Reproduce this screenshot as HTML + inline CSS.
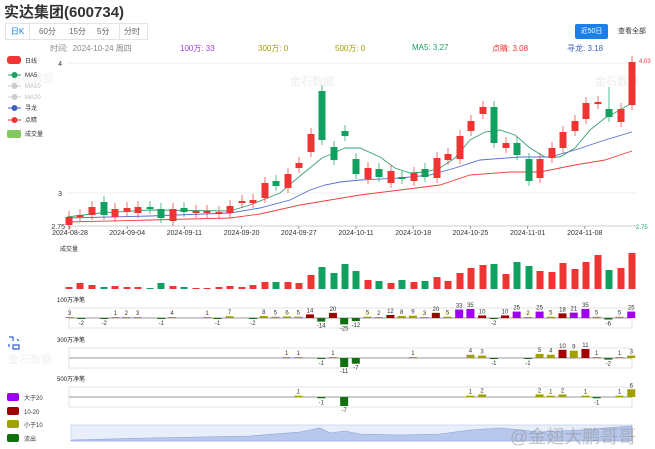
<!DOCTYPE html>
<html><head><meta charset="utf-8">
<style>
*{margin:0;padding:0;box-sizing:border-box}
body{width:655px;height:448px;overflow:hidden;background:#fff;font-family:"Liberation Sans","Noto Sans CJK SC",sans-serif;position:relative;color:#333}
.a{position:absolute;white-space:nowrap}
</style></head><body>
<div class="a" style="left:4px;top:1px;font-size:15px;font-weight:bold;color:#333">实达集团(600734)</div>
<div class="a" style="left:5px;top:23px;width:143px;height:17px;border:1px solid #e4e4e4;font-size:8px;color:#666">
<span class="a" style="left:0;top:0;width:24px;height:15px;line-height:15px;text-align:center;color:#1a7fe0;border-right:1px solid #e4e4e4">日K</span>
<span class="a" style="left:33px;top:0;line-height:15px">60分</span>
<span class="a" style="left:63px;top:0;line-height:15px">15分</span>
<span class="a" style="left:91px;top:0;line-height:15px">5分</span>
<span class="a" style="left:113px;top:0;line-height:15px;padding-left:4px;border-left:1px solid #e4e4e4">分时</span>
</div>
<div class="a" style="left:575px;top:24px;width:33px;height:15px;background:#1a7fe8;color:#fff;font-size:7px;line-height:15px;text-align:center;border-radius:2px">近50日</div>
<div class="a" style="left:612px;top:24px;width:40px;height:15px;color:#333;font-size:7px;line-height:15px;text-align:center">查看全部</div>
<div class="a" style="top:43px;font-size:8px;left:50px;color:#888">时间:&nbsp; 2024-10-24 周四</div>
<div class="a" style="top:43px;font-size:8px;left:180px;color:#a040e0">100万: 33</div>
<div class="a" style="top:43px;font-size:8px;left:258px;color:#a0a000">300万: 0</div>
<div class="a" style="top:43px;font-size:8px;left:335px;color:#a0a000">500万: 0</div>
<div class="a" style="top:43px;font-size:8px;left:412px;color:#20a060">MA5: 3.27</div>
<div class="a" style="top:43px;font-size:8px;left:492px;color:#f03030">点睛: 3.08</div>
<div class="a" style="top:43px;font-size:8px;left:567px;color:#4060c0">寻龙: 3.18</div>
<svg class="a" style="left:0;top:0" width="655" height="448" id="s"></svg>
<div class="a" style="left:510px;top:423px;font-size:18px;color:rgba(140,140,140,.5)">@金翅大鹏哥哥</div>
<script>
var s=document.getElementById('s'),h='';
function T(x,y,t,c,sz,a){h+='<text x="'+x+'" y="'+y+'" fill="'+c+'" font-size="'+sz+'" text-anchor="'+(a||'start')+'" font-family="Liberation Sans,Noto Sans CJK SC,sans-serif">'+t+'</text>';}
function R(x,y,w,hh,c){h+='<rect x="'+x+'" y="'+y+'" width="'+w+'" height="'+hh+'" fill="'+c+'"/>';}
function L(x1,y1,x2,y2,c,w){h+='<line x1="'+x1+'" y1="'+y1+'" x2="'+x2+'" y2="'+y2+'" stroke="'+c+'" stroke-width="'+(w||1)+'"/>';}
L(67,63,637,63,'#eee');L(67,193,637,193,'#eee');L(67,226,637,226,'#ccc');
T(62,66,'4','#333',7,'end');T(62,196,'3','#333',7,'end');T(65,229,'2.75','#333',7,'end');
T(639,63,'4.03','#f03030',6);T(636,229,'2.75','#20a080',6);
var dl=['2024-08-28','2024-09-04','2024-09-11','2024-09-20','2024-09-27','2024-10-11','2024-10-18','2024-10-25','2024-11-01','2024-11-08'];
for(var i=0;i<10;i++){var x=70+i*57.2;L(x,226,x,229,'#999');T(x,235,dl[i],'#333',7,'middle');}
T(290,85,'金石数据','#ececec',11);T(595,85,'金石数据','#ececec',11);T(10,82,'金石数据','#f0f0f0',11);T(8,363,'金石数据','#f0f0f0',11);
h+='<rect x="7" y="56" width="14" height="8" rx="3" fill="#f03434"/>';T(25,63,'日线','#333',6);
var lg=[['MA5','#20a060',77],['MA10','#ccc',88],['MA20','#ccc',99],['寻龙','#4060c0',110],['点睛','#f03030',122]];
lg.forEach(function(g){L(8,g[2]-2,21,g[2]-2,g[1]);h+='<circle cx="14.5" cy="'+(g[2]-2)+'" r="3" fill="'+g[1]+'"/>';T(25,g[2],g[0],g[0].indexOf('MA1')==0||g[0]=='MA20'?'#bbb':'#333',6);});
h+='<rect x="7" y="130" width="14" height="8" rx="2" fill="#80c860"/>';T(25,136,'成交量','#333',6);
function P(pts,c){h+='<polyline fill="none" stroke="'+c+'" stroke-width="0.9" points="'+pts+'"/>';}
P('67,217 100,213 150,210 230,211 250,205 280,193 300,176 322,158 334,153 345,148 360,148 380,157 395,168 410,173 425,172 440,168 455,158 470,140 485,132 500,130 515,135 530,148 545,157 560,157 575,148 590,130 605,118 620,110 632,103','#3aa070');
P('67,218 150,216 230,213 260,208 290,200 310,190 325,185 340,182 360,180 400,178 430,175 455,168 480,160 520,157 550,157 575,150 605,140 632,132','#5070d0');
P('67,222 150,220 230,218 260,214 300,205 330,200 360,195 400,190 440,185 470,175 510,172 540,172 575,165 605,160 632,151','#f04040');
var C=[[69,217,225,1],[80,215,217,1],[92,207,215,1],[104,202,215,0],[115,209,217,1],[127,208,212,1],[138,207,213,1],[150,207,209,0],[161,209,218,0],[173,209,221,1],[184,208,212,0],[196,211,213,1],[207,211,213,1],[219,212,214,1],[230,206,213,1],[242,201,203,1],[253,200,203,1],[265,183,198,1],[276,181,186,0],[288,174,188,1],[299,163,168,1],[311,134,152,1],[322,91,140,0],[334,147,160,0],[345,131,136,0],[356,159,174,0],[368,168,179,1],[379,169,177,0],[391,171,183,1],[402,177,179,0],[414,173,181,1],[425,169,177,0],[437,158,178,1],[448,154,160,1],[460,136,159,1],[471,121,131,1],[483,107,114,1],[494,107,143,0],[506,143,148,1],[517,143,155,0],[529,159,181,0],[540,159,178,1],[552,148,158,1],[563,132,148,1],[575,121,131,1],[586,103,119,1],[598,102,104,1],[609,109,117,0],[621,109,122,1],[632,62,105,1]];
var V=[2,6,4,2,3,2,2,1,6,3,2,1,1,2,3,2,4,7,7,7,6,14,22,16,25,18,9,8,6,9,7,8,12,8,16,21,24,25,15,27,23,18,17,26,20,27,34,19,21,36,36];
T(60,251,'成交量','#333',6);
C.forEach(function(c,i){var col=c[3]?'#f03434':'#10a060';var ww=[c[1]-6,c[2]+5];if(i==47)ww[0]=87;L(c[0],ww[0],c[0],ww[1],col,0.7);R(c[0]-3.5,c[1],7,Math.max(1.5,c[2]-c[1]),col);
var vh=V[i]*1.0;R(c[0]-3.5,289-vh,7,vh,col);});
function panel(yt,t,vals,mx){T(57,yt,t,'#222',6);var b=yt+6;h+='<rect x="69" y="'+b+'" width="563" height="20" fill="none" stroke="#ddd" stroke-width="0.8"/>';var z=b+10;L(69,z,632,z,'#999',1);
vals.forEach(function(v){var x=v[1]/2.4,val=v[0];var hh=Math.max(1,Math.abs(val)/mx*9);var col=val<0?'#107010':val>20?'#a000f0':val>=10?'#a00000':'#a0a000';
if(val>0){R(x-4,z-hh,8,hh,col);T(x,z-hh-2,val,'#333',6,'middle');}else{R(x-4,z,8,hh,col);T(x,z+hh+6,val,'#333',6,'middle');}});}
panel(302,'100万净笔',[[3,167],[-2,195],[-2,250],[1,277],[2,303],[3,330],[-1,387],[4,413],[1,497],[-1,522],[7,551],[-2,607],[8,633],[5,661],[6,689],[5,716],[14,744],[-14,771],[20,799],[-25,826],[-12,854],[5,882],[2,909],[12,937],[8,964],[9,991],[3,1019],[20,1046],[5,1074],[33,1102],[35,1129],[10,1157],[-2,1185],[10,1212],[25,1240],[2,1267],[25,1295],[5,1322],[18,1350],[21,1377],[35,1405],[5,1432],[-6,1460],[5,1487],[25,1515]],35);
panel(342,'300万净笔',[[1,688],[1,716],[1,799],[-1,771],[-11,826],[-7,854],[1,991],[4,1129],[3,1157],[-1,1185],[-1,1267],[5,1295],[4,1322],[10,1350],[9,1377],[11,1405],[1,1432],[-2,1460],[1,1487],[3,1515]],11);
panel(381,'500万净笔',[[1,716],[-1,771],[-7,826],[1,1129],[2,1157],[2,1295],[1,1322],[2,1350],[1,1405],[-1,1432],[1,1487],[6,1515]],7);
h+='<path d="M9 337 h4 v4 M19 341 l-2 -2 M9 347 v-3 M13 345 h6 v4 h-6z" fill="none" stroke="#3060d0" stroke-width="1.2"/>';
[['大于20','#a000f0',398],['10-20','#a00000',412],['小于10','#a0a000',425],['流出','#107010',439]].forEach(function(g){h+='<rect x="7" y="'+(g[2]-5)+'" width="12" height="8" rx="2" fill="'+g[1]+'"/>';T(24,g[2]+2,g[0],'#333',6);});
h+='<rect x="71" y="425" width="561" height="16" fill="#e8eefa" stroke="#c8d4ee" stroke-width="0.8"/>';
h+='<path d="M71 440 L150 438 L250 436 L300 432 L320 428 L330 433 L345 431 L360 434 L400 435 L440 434 L470 430 L500 428 L540 432 L580 430 L632 426 L632 441 L71 441Z" fill="#b8c8ec" stroke="#8aa0d8" stroke-width="0.6"/>';
s.innerHTML=h;
</script>
</body></html>
